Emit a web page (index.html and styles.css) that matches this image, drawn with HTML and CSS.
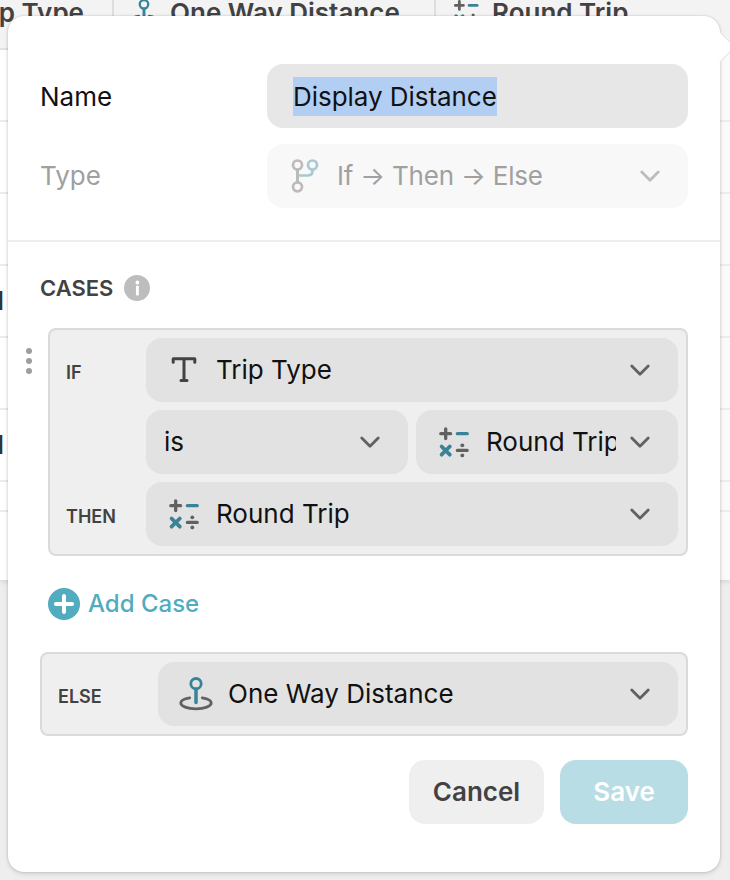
FILE: index.html
```html
<!DOCTYPE html>
<html lang="en">
<head>
<meta charset="utf-8">
<title>Edit Column</title>
<link rel="stylesheet" href="styles.css">
</head>
<body>
<svg class="defs" aria-hidden="true">
  <symbol id="chevron" viewBox="0 0 20 12"><path d="M1.8 2 10 10.2 18.2 2" fill="none" stroke="currentColor" stroke-width="2.8" stroke-linecap="round" stroke-linejoin="round"/></symbol>
  <symbol id="math" viewBox="0 0 32 32">
    <g fill="none" stroke-linecap="round" stroke-width="3.3">
      <path d="M2.8 7.7H12.6M7.7 2.8V12.6M19.4 24.4H29.2" stroke="#616161"/>
      <path d="M19.4 7.7H29.2" class="teal"/>
      <path d="M3.6 20.5 11.8 28.7M11.8 20.5 3.6 28.7" class="teal" stroke-width="3.8"/>
    </g>
    <circle cx="24.3" cy="19.3" r="1.9" fill="#616161"/><circle cx="24.3" cy="29.4" r="1.9" fill="#616161"/>
  </symbol>
  <symbol id="pin" viewBox="0 0 34 36">
    <path d="M10.7 21.9C5 22.8 1.8 24.6 1.8 27c0 3.3 6.7 5.8 15.2 5.8S32.2 30.3 32.2 27c0-2.4-3.2-4.2-8.9-5.1" fill="none" stroke="#616161" stroke-width="2.8" stroke-linecap="round"/>
    <circle cx="17" cy="7.7" r="5.2" fill="none" class="teal" stroke-width="2.8"/>
    <path d="M17 13V26.5" fill="none" class="teal" stroke-width="3.5" stroke-linecap="round"/>
  </symbol>
</svg>

<div class="table">
  <div class="head">
    <div class="th th-first">Trip Type</div>
    <div class="th th-pin"><svg class="icon-pin"><use href="#pin"/></svg>One Way Distance</div>
    <div class="th th-math"><svg class="icon-math"><use href="#math"/></svg>Round Trip</div>
  </div>
  <div class="row"></div>
  <div class="row"></div>
  <div class="row"></div>
  <div class="row"><span class="cell">Round</span></div>
  <div class="row"></div>
  <div class="row"><span class="cell">Round</span></div>
  <div class="row row-short"></div>
  <div class="row row-last"></div>
</div>

<form class="dialog">
  <span class="arrow"></span>
  <section class="general">
    <div class="field">
      <label class="name">Name</label>
      <div class="input"><span class="selected">Display Distance</span></div>
    </div>
    <div class="field disabled">
      <label>Type</label>
      <div class="input">
        <svg class="icon-branch" viewBox="0 0 28 34">
          <g fill="none" stroke-width="2.7"><path d="M7 16.5H16.5Q21.5 16.5 21.5 12V10" class="teal"/><circle cx="21.5" cy="6" r="4.5" class="teal"/>
          <g stroke="#616161"><circle cx="6.5" cy="6" r="4.5"/><circle cx="6.5" cy="27.8" r="4.5"/><path d="M6.5 10.6V23.2" stroke-width="3"/></g></g>
        </svg>
        <span class="value">If → Then → Else</span>
        <svg class="chevron"><use href="#chevron"/></svg>
      </div>
    </div>
  </section>

  <section class="cases">
    <h2>CASES <svg class="info" viewBox="0 0 26 26"><circle cx="13" cy="13" r="13" fill="#bdbdbd"/><circle cx="13.4" cy="7.5" r="1.9" fill="#fff"/><path d="M13.4 12V19.3" stroke="#fff" stroke-width="2.9" stroke-linecap="round"/></svg></h2>

    <div class="case">
      <div class="handle"><i></i><i></i><i></i></div>
      <div class="box">
        <div class="line">
          <span class="tag">IF</span>
          <div class="select">
            <svg class="icon-text" viewBox="0 0 32 32"><path d="M5.2 8.3V4.8H26.8V8.3M16 4.8V26.2M13 26.6H19" fill="none" stroke="#424242" stroke-width="3" stroke-linecap="round" stroke-linejoin="round"/></svg>
            <span class="value">Trip Type</span>
            <svg class="chevron"><use href="#chevron"/></svg>
          </div>
        </div>
        <div class="line">
          <span class="tag"></span>
          <div class="pair">
            <div class="select plain"><span class="value">is</span><svg class="chevron"><use href="#chevron"/></svg></div>
            <div class="select narrow"><svg class="icon-math"><use href="#math"/></svg><span class="value">Round Trip</span><svg class="chevron"><use href="#chevron"/></svg></div>
          </div>
        </div>
        <div class="line">
          <span class="tag">THEN</span>
          <div class="select"><svg class="icon-math"><use href="#math"/></svg><span class="value">Round Trip</span><svg class="chevron"><use href="#chevron"/></svg></div>
        </div>
      </div>
    </div>

    <div class="add">
      <svg class="plus" viewBox="0 0 32 32"><circle cx="16" cy="16" r="16" fill="#51acc0"/><path d="M7.9 16H24.1M16 7.9V24.1" stroke="#fff" stroke-width="4" stroke-linecap="round"/></svg>
      <span>Add Case</span>
    </div>

    <div class="box else">
      <div class="line">
        <span class="tag">ELSE</span>
        <div class="select"><svg class="icon-pin"><use href="#pin"/></svg><span class="value">One Way Distance</span><svg class="chevron"><use href="#chevron"/></svg></div>
      </div>
    </div>

    <div class="actions">
      <button type="button" class="btn cancel">Cancel</button>
      <button type="button" class="btn save">Save</button>
    </div>
  </section>
</form>
</body>
</html>
```
FILE: styles.css
```css
* { box-sizing: border-box; }
body {
  margin: 0;
  width: 730px;
  height: 880px;
  position: relative;
  overflow: hidden;
  background: #eee;
  font: 400 26px/32px Inter, sans-serif;
  color: #111;
}
svg { display: block; flex: none; }
.defs { position: absolute; width: 0; height: 0; }
.teal { stroke: #388398; }
.icon-math, .icon-text { width: 32px; height: 32px; }
.icon-pin { width: 34px; height: 36px; }

.table { height: 580px; background: #fff; box-shadow: 0 1px 6px rgba(0,0,0,.14); }
.head { display: flex; height: 50px; background: #f3f3f3; border-bottom: 2px solid #e2e2e2; }
.th { display: flex; height: 48px; padding-bottom: 22px; align-items: center; font-weight: 600; color: #424242; white-space: nowrap; }
.th-first { width: 112px; padding-right: 28px; justify-content: flex-end; }
.th-pin, .th-math { border-left: 2px solid #dedede; }
.th-pin { width: 322px; padding-left: 16px; gap: 12px; }
.th-pin .icon-pin { width: 28px; height: 29.6px; }
.th-math { padding-left: 17px; gap: 12.5px; }
.th-math .icon-math { width: 26.5px; height: 26.5px; margin-bottom: 2px; }
.row { height: 72px; border-bottom: 2px solid #ececec; display: flex; align-items: center; background: linear-gradient(90deg, #fff 715px, #fafafa 715px); }
.row-short { height: 30px; }
.row-last { height: 68px; border: 0; }
.cell { width: 4px; display: flex; justify-content: flex-end; font-weight: 500; color: #333; }

.dialog {
  position: absolute;
  left: 8px;
  top: 16px;
  width: 712px;
  height: 856px;
  background: #fff;
  border-radius: 16px;
  box-shadow: 0 0 2px rgba(0,0,0,.22), 0 2px 5px rgba(0,0,0,.12);
}
.arrow { position: absolute; right: -11px; top: 20px; width: 22px; height: 22px; background: #fff; transform: rotate(45deg); border: 1.5px solid #e2e2e2; border-left: 0; border-bottom: 0; }

.general { height: 226px; padding: 48px 32px 0; border-bottom: 2px solid #eee; display: flex; flex-direction: column; gap: 16px; }
.field { display: flex; align-items: center; justify-content: space-between; height: 64px; }
.name { padding-top: 2px; }
.input { width: 421px; height: 64px; border-radius: 16px; background: #e7e7e7; display: flex; align-items: center; padding: 0 28px 0 26px; }
.selected { background: #b2cef3; line-height: 39px; height: 39px; letter-spacing: -0.05px; }
.disabled label, .disabled .value { color: #a0a0a0; }
.disabled .input { background: #f8f8f8; padding-left: 24px; }
.icon-branch { width: 28px; height: 34px; opacity: .4; }
.disabled .value { margin-left: 18px; letter-spacing: -0.2px; }
.chevron { width: 20px; height: 12px; color: #616161; margin-left: auto; }
.disabled .chevron { color: #bdbdbd; }

.cases { padding: 32px 32px 0; }
h2 { margin: 0; height: 28px; display: flex; align-items: center; gap: 11px; font-size: 22px; line-height: 28px; font-weight: 600; color: #424242; }
.info { width: 26px; height: 26px; }
.case { display: flex; margin: 26px 0 0 -15px; }
.handle { width: 23px; padding: 20px 0 0 1px; display: flex; flex-direction: column; gap: 4px; }
.handle i { width: 6px; height: 6px; border-radius: 50%; background: #9e9e9e; }
.box { flex: 1; min-width: 0; border: 2px solid #dadada; border-radius: 8px; background: #efefef; padding: 8px; display: flex; flex-direction: column; gap: 8px; }
.line { display: flex; gap: 8px; }
.tag { flex: none; width: 80px; padding: 20px 0 0 8px; font-size: 18px; line-height: 30px; font-weight: 600; color: #424242; }
.pair { flex: 1; display: grid; grid-template-columns: 1fr 1fr; gap: 8px; }
.select { flex: 1 1 0; min-width: 0; height: 64px; border-radius: 16px; background: #e2e2e2; display: flex; align-items: center; padding: 0 28px 0 22px; }
.select .value { white-space: nowrap; overflow: hidden; margin-left: 16px; }
.select.plain { padding-left: 18px; }
.select.plain .value { margin-left: 0; }
.narrow .value { width: 130px; }
.add { display: flex; align-items: center; gap: 8px; margin: 32px 0 32px 8px; height: 32px; color: #51acc0; font-size: 24px; font-weight: 500; }
.plus { width: 32px; height: 32px; }
.else .tag { width: 100px; }
.else .select { padding-left: 21px; }
.else .select .value { margin-left: 15px; }
.actions { display: flex; justify-content: flex-end; gap: 16px; margin-top: 24px; }
.btn { height: 64px; border: 0; border-radius: 16px; font: 600 26px/32px Inter, sans-serif; padding: 0; }
.cancel { width: 135px; background: #efefef; color: #424242; }
.save { width: 128px; background: #b8dde4; color: #fff; }
```
